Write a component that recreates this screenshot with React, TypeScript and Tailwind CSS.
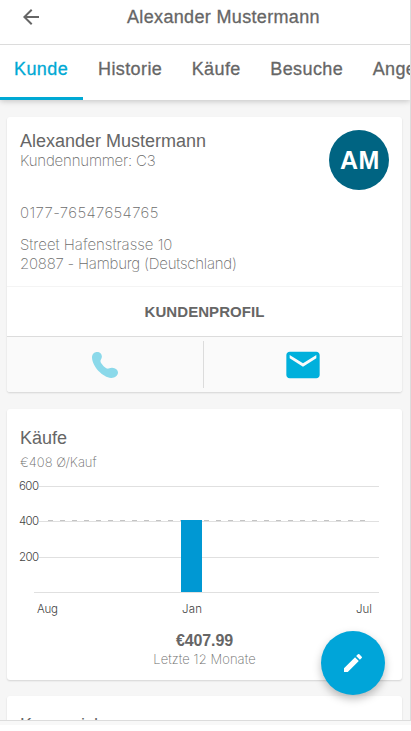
import type { ReactNode } from 'react';
import { MdArrowBack, MdEdit, MdEmail } from 'react-icons/md';

const tabs = ['Kunde', 'Historie', 'Käufe', 'Besuche', 'Angebote'];

function Card({ children }: { children: ReactNode }) {
    return (
        <section className="shrink-0 overflow-hidden rounded-[3px] bg-white shadow-[0_1px_2px_rgba(0,0,0,0.14)]">
            {children}
        </section>
    );
}

function PhoneIcon() {
    return (
        <svg className="h-[28px] w-[28px] text-[#8bd9ea]" viewBox="0 0 28 28" fill="currentColor">
            <path d="M1 6.3C1 3.2 3.2 1 6.1 1c2.8 0 4.8 2.1 4.8 4.6 0 2.4-1.7 3.2-1.4 4.9.4 2.3 4.6 6.6 6.6 7.1 1.5.3 2.7-1 5-.9 3.4.1 5.9 2.3 5.9 4.9 0 3-3 5.4-6.9 5.3C12 26.7 1 15.5 1 6.3Z" />
        </svg>
    );
}

function SalesChart() {
    return (
        <svg className="block h-[142px] w-full" viewBox="7 475 395 142" fontFamily="Inter, Liberation Sans, sans-serif">
            {/* Grid */}
            <g stroke="#e0e0e0" strokeWidth="1">
                <path d="M39 486.5h340M39 521.5h340M39 557.5h340M34 592.5h345" />
            </g>
            <path d="M48 520.5H365" stroke="#c4c4c4" strokeWidth="1.2" strokeDasharray="5 7" />
            <rect x="181" y="520" width="21" height="72" fill="#0098d3" />
            {/* Labels */}
            <g fill="#444" fontSize="11.5" fontWeight="300">
                <text x="19" y="490" textLength="20">600</text>
                <text x="19" y="525" textLength="20">400</text>
                <text x="19" y="561" textLength="20">200</text>
                <text x="37" y="613" textLength="21">Aug</text>
                <text x="182" y="613" textLength="20">Jan</text>
                <text x="356" y="613" textLength="16">Jul</text>
            </g>
        </svg>
    );
}

export default function App() {
    return (
        <div className="relative flex h-[731px] w-[411px] flex-col overflow-hidden bg-white font-['Liberation_Sans',sans-serif] text-[#666]">
            <div className="flex h-[721px] shrink-0 flex-col overflow-hidden border-r border-b border-[#dcdcdc] bg-[#f6f6f6]">
                {/* Header */}
                <header className="z-10 shrink-0 bg-white shadow-[0_1px_6px_rgba(0,0,0,0.22)]">
                    <div className="flex h-[45px] items-start border-b border-[#dcdcdc] pl-[19px]">
                        <MdArrowBack className="mt-[5px] h-6 w-6" />
                        <h1 className="mt-[5px] ml-[84px] text-[18px] leading-6 tracking-[0.34px] [-webkit-text-stroke:0.3px_#666]">
                            Alexander Mustermann
                        </h1>
                    </div>
                    <nav className="flex h-[55px] overflow-hidden whitespace-nowrap">
                        {tabs.map((tab, i) => (
                            <div
                                key={tab}
                                className={
                                    i === 0
                                        ? 'w-[83px] shrink-0 border-b-[3px] border-[#00a9d4] pt-3 pl-[14px] text-[18px] leading-6 tracking-[0.4px] text-[#00a9d4] [-webkit-text-stroke:0.3px_#00a9d4]'
                                        : 'shrink-0 pt-3 pr-[14.5px] pl-[15px] text-[18px] leading-6 tracking-[0.4px] [-webkit-text-stroke:0.3px_#666]'
                                }
                            >
                                {tab}
                            </div>
                        ))}
                    </nav>
                </header>

                <main className="flex flex-col gap-4 pt-[17px] pr-2 pl-[7px]">
                    {/* Customer */}
                    <Card>
                        <div className="flex h-[169px] justify-between pt-[13px] pr-[13px] pl-[13px]">
                            <div className="font-['Inter','Liberation_Sans',sans-serif] text-[15px] leading-[19px] font-extralight text-[#6c6c6c]">
                                <h2 className="pt-[1px] font-['Liberation_Sans',sans-serif] text-[18px] leading-5 font-normal text-[#666]">
                                    Alexander Mustermann
                                </h2>
                                <p className="tracking-[-0.18px]">Kundennummer: C3</p>
                                <p className="mt-[33px] tracking-[0.37px]">0177-76547654765</p>
                                <p className="mt-[13px]">Street Hafenstrasse 10</p>
                                <p className="tracking-[-0.23px]">20887 - Hamburg (Deutschland)</p>
                            </div>
                            <div className="flex h-[60px] w-[60px] items-center justify-center rounded-full bg-[#006482] pt-px pl-0.5 text-[25px] font-bold tracking-[0.5px] text-white">
                                AM
                            </div>
                        </div>
                        <div className="flex h-[50px] items-center justify-center border-t border-[#f4f4f4] pt-px text-[15px] font-bold tracking-[0.05px]">
                            KUNDENPROFIL
                        </div>
                        <div className="flex h-[56px] border-t border-[#dcdcdc] bg-[#fafafa]">
                            <div className="my-1 flex w-[197px] items-center justify-center border-r border-[#dcdcdc]">
                                <PhoneIcon />
                            </div>
                            <div className="flex flex-1 items-center justify-center">
                                <MdEmail className="h-10 w-10 text-[#00b0dc]" />
                            </div>
                        </div>
                    </Card>

                    {/* Purchases */}
                    <div className="pt-px">
                        <Card>
                            <div className="h-[66px] pt-[18px] pl-[13px]">
                                <h2 className="text-[18px] leading-[22px]">Käufe</h2>
                                <p className="mt-[5px] font-['Inter','Liberation_Sans',sans-serif] text-[13px] leading-4 font-extralight text-[#6c6c6c]">
                                    €408 Ø/Kauf
                                </p>
                            </div>
                            <SalesChart />
                            <div className="h-[63px] pt-[14px] text-center">
                                <p className="text-[16px] leading-5 font-bold tracking-[-0.1px]">€407.99</p>
                                <p className="font-['Inter','Liberation_Sans',sans-serif] text-[13px] leading-4 font-extralight tracking-[0.08px] text-[#6c6c6c]">
                                    Letzte 12 Monate
                                </p>
                            </div>
                        </Card>
                    </div>

                    <Card>
                        <h2 className="h-20 pt-[18px] pl-[13px] text-[18px] leading-[22px]">Kennzeichen</h2>
                    </Card>
                </main>
            </div>
            <div className="h-1 shrink-0 bg-[#f8f8f8]" />

            {/* Floating action */}
            <button className="absolute top-[631px] left-[321px] z-20 flex h-16 w-16 items-center justify-center rounded-full bg-[#00a5d9] text-white shadow-[0_4px_8px_rgba(0,0,0,0.26)]">
                <MdEdit className="h-6 w-6" />
            </button>
        </div>
    );
}
